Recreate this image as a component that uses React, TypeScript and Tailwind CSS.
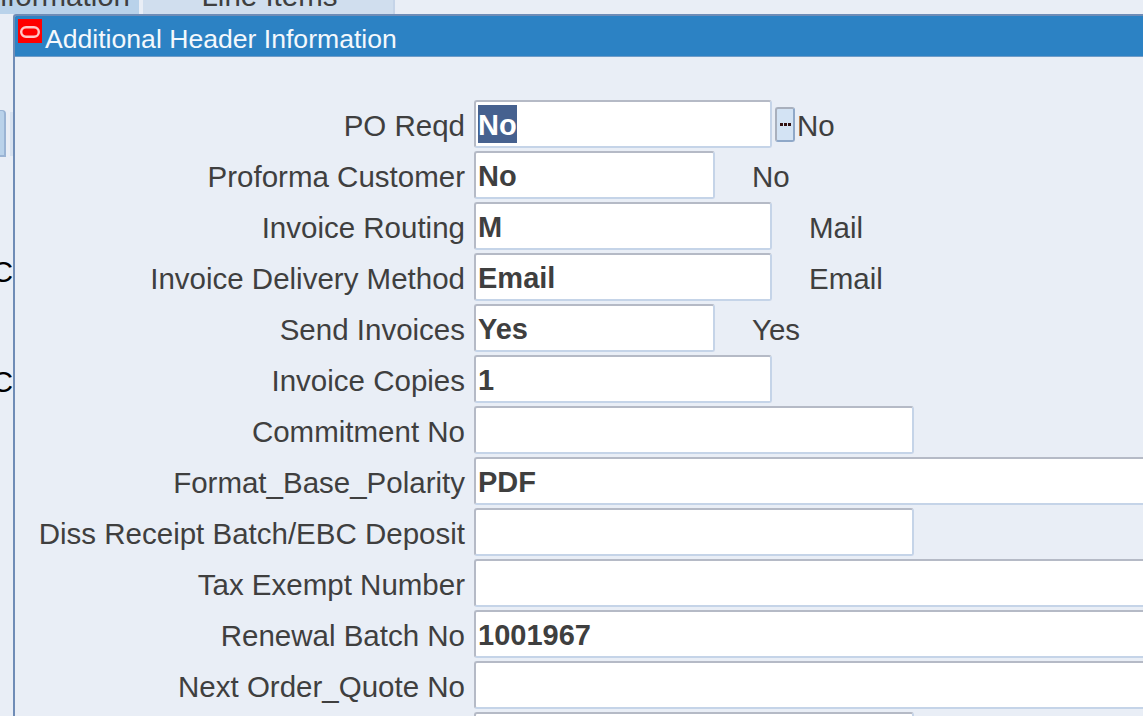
const FONT = "font-['Liberation_Sans',Arial,sans-serif]";

interface RowProps {
  label: string;
  value?: string;
  width: string;
  desc?: string;
  lov?: boolean;
  selected?: boolean;
}

const ROWS: RowProps[] = [
  { label: "PO Reqd", value: "No", width: "w-[298px]", desc: "No", lov: true, selected: true },
  { label: "Proforma Customer", value: "No", width: "w-[241px]", desc: "No" },
  { label: "Invoice Routing", value: "M", width: "w-[298px]", desc: "Mail" },
  { label: "Invoice Delivery Method", value: "Email", width: "w-[298px]", desc: "Email" },
  { label: "Send Invoices", value: "Yes", width: "w-[241px]", desc: "Yes" },
  { label: "Invoice Copies", value: "1", width: "w-[298px]" },
  { label: "Commitment No", width: "w-[440px]" },
  { label: "Format_Base_Polarity", value: "PDF", width: "w-[700px]" },
  { label: "Diss Receipt Batch/EBC Deposit", width: "w-[440px]" },
  { label: "Tax Exempt Number", width: "w-[700px]" },
  { label: "Renewal Batch No", value: "1001967", width: "w-[700px]" },
  { label: "Next Order_Quote No", width: "w-[700px]" },
  { label: "", width: "w-[440px]" },
];

const Row = ({ label, value, width, desc, lov, selected }: RowProps) => (
  <div className="flex h-[48px] shrink-0 items-center">
    <div className="w-[459px] shrink-0 pt-[3px] pr-[9px] text-right whitespace-nowrap">{label}</div>
    <div
      className={`${width} box-border flex h-[48px] shrink-0 items-center rounded-[3px] border-2 border-t-[#b5bac6] border-r-[#c5d4e8] border-b-[#c5d4e8] border-l-[#b5bac6] bg-white pl-[2px] text-[29px] font-bold`}
    >
      {selected ? (
        <span className="flex h-[38px] items-center bg-[#46618f] pt-[3px] text-white">{value}</span>
      ) : (
        <span className="pt-[3px]">{value}</span>
      )}
    </div>
    {lov && (
      <div className="ml-[3px] flex h-[35px] w-[20px] shrink-0 items-center justify-center gap-[1px] rounded-[3px] border-2 border-t-[#a9b0bd] border-r-[#8fa8c8] border-b-[#8fa8c8] border-l-[#a9b0bd] bg-[#d3e3f4]">
        <span className="h-[3px] w-[3px] bg-[#301010]" />
        <span className="h-[3px] w-[3px] bg-[#301010]" />
        <span className="h-[3px] w-[3px] bg-[#301010]" />
      </div>
    )}
    {desc && <div className={lov ? "ml-[2px] pt-[3px]" : "ml-[37px] pt-[3px]"}>{desc}</div>}
  </div>
);

export default function App() {
  return (
    <div className={`${FONT} flex h-[716px] w-[1143px] flex-col overflow-hidden bg-[#e9eef6] text-[29.5px] leading-none text-[#3f3f3f]`}>
      {/* tab strip, text cut by the top edge */}
      <div className="flex h-[14px] shrink-0 items-end overflow-hidden">
        <div className="flex h-[14px] w-[139px] shrink-0 items-end justify-end overflow-hidden bg-[#b9d2ea] pr-[9px]">
          <span className="mb-[4px] whitespace-nowrap">Information</span>
        </div>
        <div className="ml-[4px] flex h-[14px] w-[252px] shrink-0 items-end justify-center overflow-hidden border-r-2 border-[#c5d4e8] bg-[#d0deee] pl-[3px]">
          <span className="mb-[4px] whitespace-nowrap">Line Items</span>
        </div>
      </div>

      <div className="flex min-h-0 flex-1">
        {/* what shows of the window behind */}
        <div className="flex w-[13px] shrink-0 flex-col items-end overflow-hidden text-black">
          <div className="mt-[96px] flex h-[48px] w-[13px] shrink-0 justify-between">
            <div className="h-[47px] w-[6px] rounded-tr-[4px] border-t border-r-2 border-b-2 border-[#9ab4d4] bg-[#b9d2ea]" />
            <div className="mt-[2px] h-[44px] w-[3px] bg-[#d8e2f0]" />
          </div>
          <div className="mt-[99px] h-[30px] shrink-0 whitespace-nowrap">C</div>
          <div className="mt-[80px] h-[30px] shrink-0 whitespace-nowrap">C</div>
        </div>

        <div className="flex min-w-0 flex-1 flex-col overflow-hidden rounded-tl-[3px] border-t-2 border-l-2 border-[#6f8cb6]">
          <div className="flex h-[41px] shrink-0 items-center border-b border-[#6f9cc8] bg-[#2c82c4] text-[#f4f8fc]">
            <svg viewBox="0 0 24 24" className="mt-[-11px] ml-[3px] h-[24px] w-[24px] shrink-0">
              <rect width="24" height="24" fill="#ff0000" />
              <rect x="3.2" y="8.2" width="17.6" height="9.6" rx="4.8" fill="none" stroke="#ffc8c8" strokeWidth="2.4" />
            </svg>
            <span className="mt-[6px] ml-[3px] text-[26.6px] whitespace-nowrap">Additional Header Information</span>
          </div>
          <div className="flex flex-col gap-[3px] pt-[43px]">
            {ROWS.map((r, i) => (
              <Row key={i} {...r} />
            ))}
          </div>
        </div>
      </div>
    </div>
  );
}
